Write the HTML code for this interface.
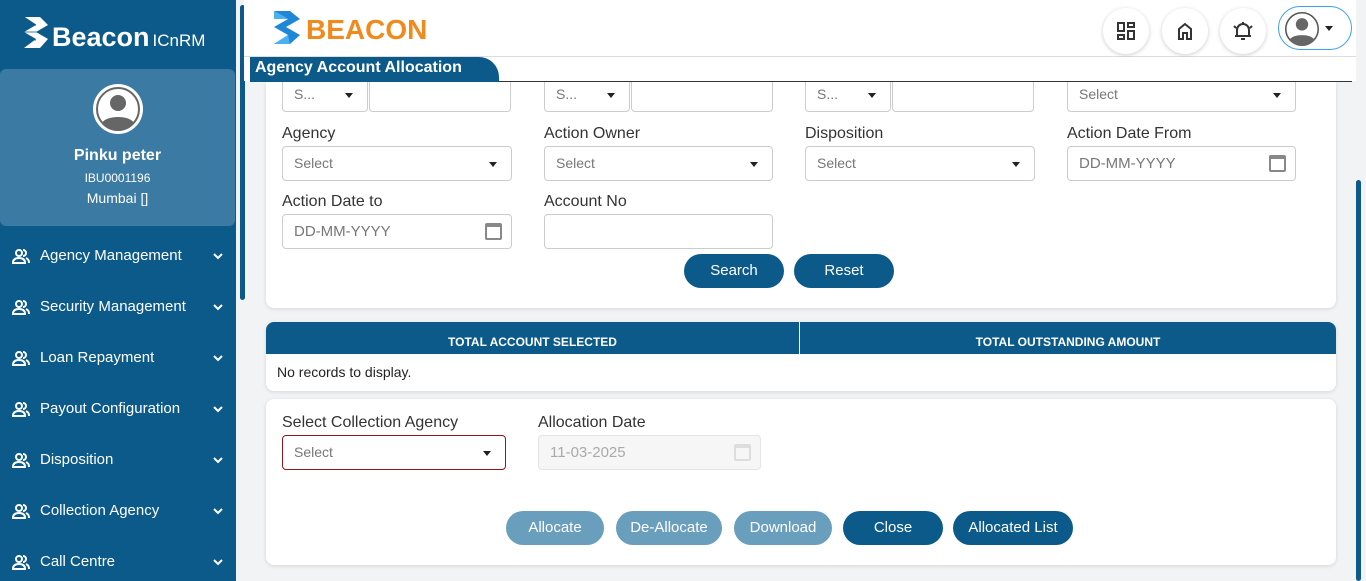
<!DOCTYPE html><html><head><style>
*{box-sizing:border-box;margin:0;padding:0}
body{width:1366px;height:581px;overflow:hidden;font-family:"Liberation Sans",sans-serif;background:#f2f3f5;position:relative;color:#222}
.sb{position:absolute;left:0;top:0;width:236px;height:581px;background:#0b5a8a;color:#fff}
.prof{position:absolute;left:0;top:69px;width:235px;height:157px;background:#3b7aa2;border-radius:6px;text-align:center}
.mi{position:absolute;left:12px;font-size:15px;display:flex;align-items:center;width:212px}
.mi span{margin-left:10px;flex:1}
.hdr{position:absolute;left:244px;top:0;width:1112px;height:57px;background:#fff;border-bottom:1px solid #ddd}
.ib{position:absolute;top:8px;width:46px;height:46px;border-radius:50%;background:#fff;box-shadow:0 1px 4px rgba(0,0,0,.2);display:flex;align-items:center;justify-content:center}
.card{position:absolute;background:#fff;border-radius:8px;box-shadow:0 1px 4px rgba(0,0,0,.12)}
.lbl{position:absolute;font-size:16px;color:#333}
.in{position:absolute;height:35px;border:1px solid #ccc;border-radius:4px;background:#fff;font-size:14px;color:#777;padding:0 11px;line-height:33px}
.dd:after{content:"";position:absolute;right:14px;top:15px;border:4px solid transparent;border-top:5px solid #222}
.cal{position:absolute;right:9px;top:8px;width:17px;height:17px;border:2px solid #888;border-top-width:4px;border-radius:2px}
.btn{position:absolute;height:34px;border-radius:17px;background:#0b5a8a;color:#fff;font-size:15px;text-align:center;line-height:34px}
.lt{background:#6a9ebd}
</style></head><body>
<svg width="0" height="0" style="position:absolute"><defs>
<symbol id="u" viewBox="0 0 18 16"><g fill="none" stroke="#fff" stroke-width="2"><circle cx="7" cy="5" r="3"/><path d="M1 15c0-4 3-5 6-5s6 1 6 5z"/><path d="M11 2a3 3 0 0 1 0 6M14 10c2 1 3 2 3 5"/></g></symbol>
<symbol id="c" viewBox="0 0 12 8"><path d="M2 2l4 4 4-4" fill="none" stroke="#fff" stroke-width="2"/></symbol>
</defs></svg>
<div class="sb">
 <svg style="position:absolute;left:22px;top:16px" width="28" height="34" viewBox="0 0 28 34"><path d="M2 1h16l8 8-12 7 12 7-8 9H2l12-9L2 16 14 9z" fill="#fff"/><path d="M2 1l12 8M14 9H2M2 16h24M14 24H2" stroke="#0b5a8a" stroke-width=".8"/></svg>
 <div style="position:absolute;left:52px;top:22px;font-size:27px;font-weight:bold">Beacon<span style="font-size:17px;font-weight:normal;margin-left:3px">ICnRM</span></div>
 <div class="prof">
  <div style="position:absolute;left:93px;top:15px;width:50px;height:50px;border-radius:50%;background:#fff;padding:3px"><svg width="44" height="44" viewBox="0 0 44 44"><circle cx="22" cy="22" r="21" fill="#fff" stroke="#666" stroke-width="2"/><circle cx="22" cy="16" r="8" fill="#666"/><path d="M6 36c4-8 28-8 32 0a20 20 0 0 1-32 0z" fill="#666"/></svg></div>
  <div style="position:absolute;top:78px;width:100%;font-size:16px;font-weight:bold">Pinku peter</div>
  <div style="position:absolute;top:102px;width:100%;font-size:12px">IBU0001196</div>
  <div style="position:absolute;top:121px;width:100%;font-size:14px">Mumbai []</div>
 </div>
 <div class="mi" style="top:247px"><svg width="18" height="16"><use href="#u"/></svg><span>Agency Management</span><svg width="12" height="8"><use href="#c"/></svg></div>
 <div class="mi" style="top:298px"><svg width="18" height="16"><use href="#u"/></svg><span>Security Management</span><svg width="12" height="8"><use href="#c"/></svg></div>
 <div class="mi" style="top:349px"><svg width="18" height="16"><use href="#u"/></svg><span>Loan Repayment</span><svg width="12" height="8"><use href="#c"/></svg></div>
 <div class="mi" style="top:400px"><svg width="18" height="16"><use href="#u"/></svg><span>Payout Configuration</span><svg width="12" height="8"><use href="#c"/></svg></div>
 <div class="mi" style="top:451px"><svg width="18" height="16"><use href="#u"/></svg><span>Disposition</span><svg width="12" height="8"><use href="#c"/></svg></div>
 <div class="mi" style="top:502px"><svg width="18" height="16"><use href="#u"/></svg><span>Collection Agency</span><svg width="12" height="8"><use href="#c"/></svg></div>
 <div class="mi" style="top:553px"><svg width="18" height="16"><use href="#u"/></svg><span>Call Centre</span><svg width="12" height="8"><use href="#c"/></svg></div>
</div>
<div style="position:absolute;left:240px;top:5px;width:5px;height:295px;background:#0b5a8a;border-radius:3px"></div>
<div style="position:absolute;left:1356px;top:180px;width:5px;height:401px;background:#0b5a8a;border-radius:3px"></div>
<div class="hdr">
 <svg style="position:absolute;left:28px;top:10px" width="30" height="35" viewBox="0 0 30 35"><path d="M2 1h16l10 8-14 8 14 8-10 9H2l14-9L2 17 16 9z" fill="#1f87d8"/><path d="M2 1l14 8H2zM16 25l-14 9h16z" fill="#4bb0f0"/></svg>
 <div style="position:absolute;left:62px;top:14px;font-size:28px;font-weight:bold;color:#f08a1c">BEACON</div>
 <div class="ib" style="left:859px"><svg width="20" height="20"><g fill="none" stroke="#333" stroke-width="2"><rect x="2" y="2" width="6" height="8"/><rect x="12" y="2" width="6" height="4"/><rect x="2" y="14" width="6" height="4"/><rect x="12" y="10" width="6" height="8"/></g></svg></div>
 <div class="ib" style="left:918px"><svg width="20" height="20"><path d="M4 18V8l6-5 6 5v10h-4v-6H8v6z" fill="none" stroke="#333" stroke-width="2"/></svg></div>
 <div class="ib" style="left:976px"><svg width="22" height="22"><path d="M5 16V10a6 6 0 0 1 12 0v6zM3 16h16M9 19h4M11 2v2M2 6l2 2M20 6l-2 2" fill="none" stroke="#333" stroke-width="2"/></svg></div>
 <div style="position:absolute;left:1034px;top:6px;width:74px;height:44px;border:1px solid #3ba0f0;border-radius:22px;background:#fff"><svg style="position:absolute;left:6px;top:5px" width="34" height="34" viewBox="0 0 44 44"><circle cx="22" cy="22" r="21" fill="#fff" stroke="#555" stroke-width="2"/><circle cx="22" cy="16" r="8" fill="#666"/><path d="M6 36c4-8 28-8 32 0a20 20 0 0 1-32 0z" fill="#666"/></svg><div style="position:absolute;left:46px;top:19px;border:4px solid transparent;border-top:5px solid #222"></div></div>
</div>
<div class="card" style="left:266px;top:82px;width:1070px;height:226px;border-radius:0 0 8px 8px"></div>
<div class="in dd" style="left:282px;top:77px;width:86px">S...</div><div class="in" style="left:369px;top:77px;width:142px"></div>
<div class="in dd" style="left:544px;top:77px;width:86px">S...</div><div class="in" style="left:631px;top:77px;width:142px"></div>
<div class="in dd" style="left:805px;top:77px;width:86px">S...</div><div class="in" style="left:892px;top:77px;width:142px"></div>
<div class="in dd" style="left:1067px;top:77px;width:229px">Select</div>
<div style="position:absolute;left:244px;top:57px;width:1112px;height:24px;background:#fff"></div>
<div style="position:absolute;left:250px;top:57px;width:249px;height:25px;background:#0b5a8a;border-top-right-radius:20px;color:#fff;font-weight:bold;font-size:16px;padding:2px 0 0 5px">Agency Account Allocation</div>
<div style="position:absolute;left:499px;top:81px;width:853px;height:1px;background:#333"></div>
<div class="lbl" style="left:282px;top:125px">Agency</div>
<div class="lbl" style="left:544px;top:125px">Action Owner</div>
<div class="lbl" style="left:805px;top:125px">Disposition</div>
<div class="lbl" style="left:1067px;top:125px">Action Date From</div>
<div class="in dd" style="left:282px;top:146px;width:230px">Select</div>
<div class="in dd" style="left:544px;top:146px;width:229px">Select</div>
<div class="in dd" style="left:805px;top:146px;width:230px">Select</div>
<div class="in" style="left:1067px;top:146px;width:229px;font-size:15px">DD-MM-YYYY<div class="cal"></div></div>
<div class="lbl" style="left:282px;top:193px">Action Date to</div>
<div class="lbl" style="left:544px;top:193px">Account No</div>
<div class="in" style="left:282px;top:214px;width:230px;font-size:15px">DD-MM-YYYY<div class="cal"></div></div>
<div class="in" style="left:544px;top:214px;width:229px"></div>
<div class="btn" style="left:684px;top:254px;width:100px">Search</div>
<div class="btn" style="left:794px;top:254px;width:100px">Reset</div>
<div class="card" style="left:266px;top:322px;width:1070px;height:69px;overflow:hidden">
 <div style="height:32px;background:#0b5a8a;color:#fff;font-size:12px;font-weight:bold;display:flex">
  <div style="width:534px;text-align:center;line-height:40px;border-right:1px solid #fff">TOTAL ACCOUNT SELECTED</div>
  <div style="flex:1;text-align:center;line-height:40px">TOTAL OUTSTANDING AMOUNT</div></div>
 <div style="font-size:14px;padding:10px 11px">No records to display.</div>
</div>
<div class="card" style="left:266px;top:399px;width:1070px;height:166px"></div>
<div class="lbl" style="left:282px;top:414px">Select Collection Agency</div>
<div class="lbl" style="left:538px;top:414px">Allocation Date</div>
<div class="in dd" style="left:282px;top:435px;width:224px;border-color:#8b1a1a">Select</div>
<div class="in" style="left:538px;top:435px;width:223px;background:#f6f6f6;border-color:#e4e4e4;color:#aaa;font-size:15px">11-03-2025<div class="cal" style="border-color:#ddd"></div></div>
<div class="btn lt" style="left:506px;top:511px;width:98px">Allocate</div>
<div class="btn lt" style="left:616px;top:511px;width:106px">De-Allocate</div>
<div class="btn lt" style="left:734px;top:511px;width:98px">Download</div>
<div class="btn" style="left:843px;top:511px;width:100px">Close</div>
<div class="btn" style="left:953px;top:511px;width:120px">Allocated List</div>
</body></html>
